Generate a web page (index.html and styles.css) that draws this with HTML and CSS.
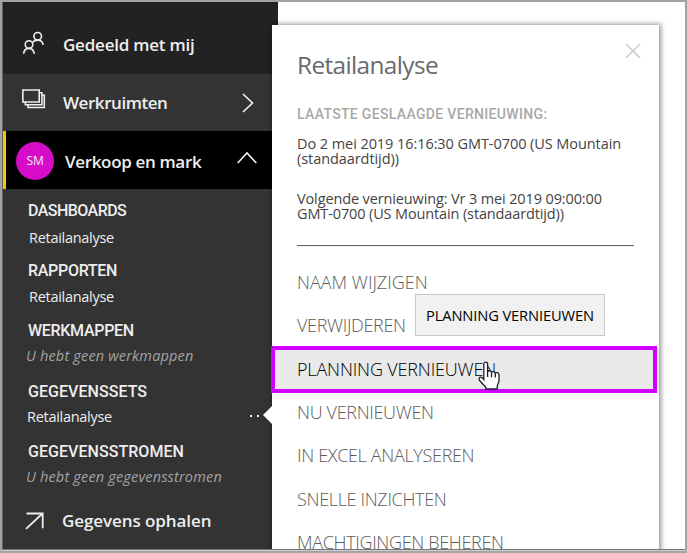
FILE: index.html
```html
<!DOCTYPE html>
<html lang="nl">
<head>
<meta charset="utf-8">
<title>Retailanalyse</title>
<link rel="stylesheet" href="styles.css">
</head>
<body>
<div class="frame">
  <nav class="sidebar">
    <div class="nav-row shared">
      <svg class="nav-icon" width="24" height="26" viewBox="0 0 24 26"><g fill="none" stroke="#eee" stroke-width="1.6"><circle cx="15.700" cy="5.300" r="3.800"/><circle cx="7" cy="13.600" r="3.800"/><path d="M1.600 22.800c.3-3.400 2.400-5.400 5.400-5.400s4.800 2 5.300 5.400M10.800 11.200c1-1.500 2.800-2.100 4.900-2.100 2.900 0 5 1.800 5.400 4.900"/></g></svg>
      <span class="nav-label">Gedeeld met mij</span>
    </div>
    <div class="nav-row workspaces">
      <svg class="nav-icon" width="24" height="21" viewBox="0 0 24 21"><g fill="none" stroke="#eee" stroke-width="1.6"><path d="M.9 1h16.300v12H.9zM3.300 13v2.700h16.600V3.700h-2.700M6 15.700v2.800h16.300V6.400h-2.400"/></g></svg>
      <span class="nav-label tight">Werkruimten</span>
      <svg class="chevron-right" width="12" height="20" viewBox="0 0 12 20"><path d="M1 1l9.500 9L1 19" fill="none" stroke="#eee" stroke-width="1.700"/></svg>
    </div>
    <div class="nav-row current">
      <span class="avatar">SM</span>
      <span class="nav-label">Verkoop en mark</span>
      <svg class="chevron-up" width="20" height="12" viewBox="0 0 20 12"><path d="M.7 11L10 1l9.300 10" fill="none" stroke="#eee" stroke-width="1.700"/></svg>
    </div>
    <div class="groups">
      <section class="group">
        <h3 class="narrow">DASHBOARDS</h3>
        <p class="item lower">Retailanalyse</p>
      </section>
      <section class="group">
        <h3>RAPPORTEN</h3>
        <p class="item low">Retailanalyse</p>
      </section>
      <section class="group">
        <h3>WERKMAPPEN</h3>
        <p class="empty">U hebt geen werkmappen</p>
      </section>
      <section class="group sets">
        <h3 class="wide">GEGEVENSSETS</h3>
        <p class="item out">Retailanalyse<span class="dots"><i></i><i></i></span></p>
      </section>
      <section class="group">
        <h3 class="wide">GEGEVENSSTROMEN</h3>
        <p class="empty">U hebt geen gegevensstromen</p>
      </section>
    </div>
    <div class="nav-row get-data">
      <svg class="nav-icon" width="20" height="18" viewBox="0 0 20 18"><path d="M1.500 1.500h16.200v14.700M17.500 1.500L1 16.800" fill="none" stroke="#eee" stroke-width="1.800"/></svg>
      <span class="nav-label loose">Gegevens ophalen</span>
    </div>
  </nav>

  <aside class="panel">
    <svg class="close" width="16" height="16" viewBox="0 0 16 16"><path d="M1 1l14 14M15 1L1 15" stroke="#ccc" stroke-width="1.500"/></svg>
    <h1>Retailanalyse</h1>
    <h2>LAATSTE GESLAAGDE VERNIEUWING:</h2>
    <p class="meta">Do 2 mei 2019 16:16:30 GMT-0700 (US Mountain<br>(standaardtijd))</p>
    <p class="meta next">Volgende vernieuwing: Vr 3 mei 2019 09:00:00<br>GMT-0700 (US Mountain (standaardtijd))</p>
    <hr>
    <ul class="menu">
      <li class="first">NAAM WIJZIGEN</li>
      <li>VERWIJDEREN</li>
      <li class="active">PLANNING VERNIEUWEN</li>
      <li>NU VERNIEUWEN</li>
      <li>IN EXCEL ANALYSEREN</li>
      <li>SNELLE INZICHTEN</li>
      <li>MACHTIGINGEN BEHEREN</li>
    </ul>
  </aside>
  <span class="pointer"></span>
  <div class="highlight"></div>
  <div class="tooltip">PLANNING VERNIEUWEN</div>
  <svg class="cursor" width="24" height="30" viewBox="0 0 24 30"><path d="M6.800 18.500V3.200C6.800.4 10.600.4 10.600 3.200V11c.3-1.800 3.800-1.600 3.900.5.500-1.500 3.600-1.200 3.800.8.600-1.200 3.500-.7 3.700 1.200v6.200c0 2.200-1.800 3.500-1.800 6v2.300H8.800v-1.800L2.600 19.500c-1.200-1.900 0-4 1.900-3.200.9.300 1.600 1.100 2.300 2.200z" fill="#fff" stroke="#1c1c2c" stroke-width="1.300"/><path d="M10.600 10v6M14.500 11.500v4.800M18.300 12.500v4" stroke="#1c1c2c" stroke-width="1.300"/></svg>
</div>
</body>
</html>
```

FILE: styles.css
```css
* { box-sizing: border-box; }
body { margin: 0; font-family: "Open Sans", "Noto Sans", sans-serif; background: #a4a4a4; }
h1, h2, h3, p, ul { margin: 0; padding: 0; }

.frame {
  position: relative;
  width: 687px;
  height: 551px;
  border: 2px solid #a2a2a2;
  border-bottom: 1px solid #ccc;
  background: #fff;
  overflow: hidden;
}
.frame::after {
  content: "";
  position: absolute;
  left: 0;
  right: 0;
  bottom: 0;
  height: 1px;
  background: #777;
}

.sidebar {
  width: 276px;
  height: 548px;
  border-left: 1px solid #626262;
  background: #333;
  color: #eee;
}
.nav-row { display: flex; align-items: center; }
.nav-label {
  font-size: 17px;
  line-height: 24px;
  font-weight: 600;
  letter-spacing: -.22px;
  white-space: nowrap;
}
.nav-label.tight { width: 180px; letter-spacing: -.45px; }
.nav-label.loose { letter-spacing: -.08px; margin-top: -1px; }

.shared { height: 72px; background: #222; padding: 14px 0 0 19px; }
.shared .nav-icon { margin-right: 17px; margin-top: -3px; }
.workspaces { height: 57px; padding-left: 19px; }
.workspaces .nav-icon { margin-right: 17px; margin-top: -6px; }
.workspaces .nav-label { padding-top: 1px; }
.chevron-right { margin-left: -1px; }
.current { height: 58px; background: #000; border-left: 3px solid #f2c811; padding-left: 10px; }
.avatar {
  width: 38px;
  height: 38px;
  border-radius: 50%;
  background: #d60cc8;
  margin: 2px 11px 0 0;
  text-align: center;
  font-size: 12px;
  line-height: 38px;
  letter-spacing: -.3px;
}
.current .nav-label { padding-top: 4px; width: 172px; letter-spacing: -.34px; }
.chevron-up { margin-bottom: 5px; }

.groups { padding: 8px 0 0 25px; }
.group { height: 60px; }
.group.sets { margin-top: 1px; }
.group h3 {
  font: 500 16px/27px Roboto, sans-serif;
  letter-spacing: -.3px;
}
.group h3.narrow { letter-spacing: -.55px; }
.group h3.wide { letter-spacing: .05px; }
.item, .empty { font-size: 14.5px; line-height: 24px; white-space: nowrap; }
.item { padding-left: 1px; letter-spacing: -.28px; }
.item.lower { padding-top: 2px; }
.item.low { padding-top: 1px; }
.item.out { display: flex; align-items: center; margin-left: -2px; }
.dots { display: flex; gap: 5px; margin: -2px 0 0 138px; }
.dots i { width: 2px; height: 2px; background: #eee; }
.empty { margin-left: -2px; font-style: italic; letter-spacing: .17px; color: #a3a3a3; }
.get-data { height: 49px; padding: 0 0 0 22px; margin-top: -1px; }
.get-data .nav-icon { margin-right: 17px; margin-top: -1px; }

.panel {
  position: absolute;
  left: 270px;
  top: 23px;
  width: 387px;
  height: 540px;
  padding-left: 25px;
  background: #fff;
  box-shadow: 1px 0 5px 1px rgba(0, 0, 0, .42);
}
.close { position: absolute; left: 353px; top: 18px; }
.panel h1 {
  padding-top: 23px;
  font-size: 24.4px;
  line-height: 34px;
  font-weight: 400;
  letter-spacing: -.62px;
  color: #666a6e;
}
.panel h2 {
  margin: 22px 0 12px;
  font: 500 14px/20px Roboto, sans-serif;
  letter-spacing: .33px;
  color: #a8a8a8;
}
.meta {
  font-size: 14.5px;
  line-height: 15px;
  letter-spacing: -.07px;
  color: #444;
  white-space: nowrap;
}
.meta.next { margin-top: 25px; letter-spacing: -.13px; }
.panel hr {
  width: 337px;
  height: 2px;
  margin: 24px 0 0;
  border: 0;
  border-top: 1px solid #666;
  background: #eee;
}
.menu { list-style: none; margin: 13.8px 0 0 -25px; }
.menu li {
  height: 43.4px;
  padding-left: 25px;
  font-size: 18px;
  line-height: 43.4px;
  font-weight: 300;
  letter-spacing: -.33px;
  color: #5c5c5c;
  white-space: nowrap;
}
.menu li.first { letter-spacing: 0; }
.menu li.active { background: #e9e9e9; color: #000; letter-spacing: -.16px; }

.pointer {
  position: absolute;
  left: 261px;
  top: 404px;
  border: 9px solid transparent;
  border-left: 0;
  border-right-color: #fff;
}
.highlight {
  position: absolute;
  left: 269px;
  top: 344px;
  width: 386px;
  height: 47px;
  border: 4px solid #d000ff;
}
.tooltip {
  position: absolute;
  left: 413px;
  top: 292px;
  width: 190px;
  height: 42px;
  border: 1px solid #c8c8c8;
  background: #f1f1f1;
  padding-left: 10px;
  font-size: 14.7px;
  line-height: 41px;
  letter-spacing: -.13px;
  color: #000;
  white-space: nowrap;
}
.cursor { position: absolute; left: 475px; top: 359px; }
```
